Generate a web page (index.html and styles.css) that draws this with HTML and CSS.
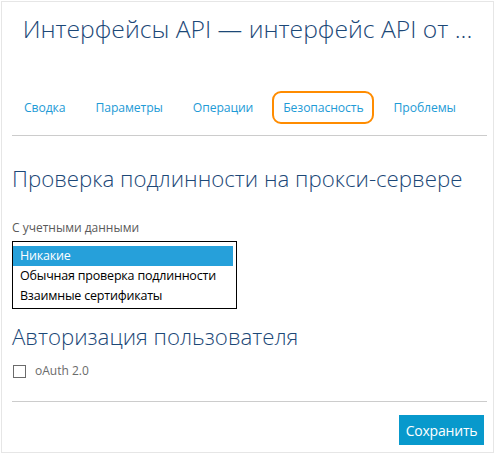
FILE: index.html
```html
<!DOCTYPE html>
<html lang="ru">
<head>
<meta charset="utf-8">
<title>Безопасность</title>
<link rel="stylesheet" href="styles.css">
</head>
<body>
<div class="card">
  <h1 class="title">Интерфейсы API — интерфейс API от ...</h1>
  <nav class="tabs">
    <a class="tab">Сводка</a>
    <a class="tab">Параметры</a>
    <a class="tab">Операции</a>
    <a class="tab tab-active">Безопасность</a>
    <a class="tab">Проблемы</a>
  </nav>
  <div class="rule"></div>
  <h2 class="heading heading-first">Проверка подлинности на прокси-сервере</h2>
  <div class="label">С учетными данными</div>
  <div class="listbox">
    <div class="option option-selected">Никакие</div>
    <div class="option">Обычная проверка подлинности</div>
    <div class="option">Взаимные сертификаты</div>
  </div>
  <h2 class="heading heading-second">Авторизация пользователя</h2>
  <label class="check-row"><span class="checkbox"></span><span class="check-text">oAuth 2.0</span></label>
  <div class="rule rule-bottom"></div>
  <div class="actions"><button class="save">Сохранить</button></div>
</div>
</body>
</html>
```
FILE: styles.css
```css
html, body {
  margin: 0;
  padding: 0;
  background: #ffffff;
}
body {
  font-family: "Open Sans", "Noto Sans", "Liberation Sans", sans-serif;
  padding: 1px 0 0 1px;
}
.card {
  box-sizing: border-box;
  width: 493px;
  height: 452px;
  border: 1px solid #e6e6e6;
  padding: 7px 6px 0 10px;
  display: flex;
  flex-direction: column;
}
.title {
  margin: 0 0 0 -4px;
  font-weight: 300;
  font-size: 24.7px;
  line-height: 40px;
  color: #1c4877;
  text-align: center;
  white-space: nowrap;
  letter-spacing: 0;
}
.tabs {
  display: flex;
  padding-left: 12px;
  margin-top: 42px;
}
.tab {
  position: relative;
  font-size: 12.2px;
  line-height: 33px;
  color: #1e9bd6;
  letter-spacing: -0.1px;
  margin-right: 30px;
}
.tab-active::after {
  content: "";
  position: absolute;
  left: -11px;
  right: -10px;
  top: 0;
  bottom: 0;
  border: 2px solid #ff8c00;
  border-radius: 9px;
}
.rule {
  height: 1px;
  background: #cccccc;
  margin-top: 11px;
}
.heading {
  margin: 0;
  font-weight: 300;
  font-size: 22.25px;
  line-height: 30px;
  color: #1c4877;
  letter-spacing: 0;
  white-space: nowrap;
}
.heading-first {
  margin-top: 28px;
}
.label {
  margin-top: 26px;
  font-size: 12px;
  line-height: 16px;
  color: #5a5a5a;
}
.listbox {
  box-sizing: border-box;
  margin-top: 5px;
  width: 225px;
  height: 68px;
  border: 1px solid #000000;
  padding: 4px 3px 2px 0;
}
.option {
  height: 20px;
  line-height: 20px;
  padding-left: 7px;
  font-size: 12.5px;
  color: #000000;
  letter-spacing: -0.2px;
  white-space: nowrap;
}
.option-selected {
  background: #26a0da;
  color: #ffffff;
}
.heading-second {
  margin-top: 13px;
}
.check-row {
  display: flex;
  align-items: center;
  margin-top: 11px;
  height: 16px;
}
.checkbox {
  box-sizing: border-box;
  width: 13px;
  height: 13px;
  border: 1px solid #6b6b6b;
  margin-left: 1px;
}
.check-text {
  margin-left: 9px;
  font-size: 12px;
  line-height: 16px;
  color: #6b6b6b;
}
.rule-bottom {
  margin-top: 22px;
}
.actions {
  display: flex;
  justify-content: flex-end;
  margin-top: 13px;
  padding-right: 3px;
}
.save {
  width: 85px;
  height: 30px;
  border: none;
  background: #0899cc;
  color: #ffffff;
  font-family: "Open Sans", "Noto Sans", "Liberation Sans", sans-serif;
  font-size: 14px;
  padding: 0;
  letter-spacing: -0.2px;
}
```
